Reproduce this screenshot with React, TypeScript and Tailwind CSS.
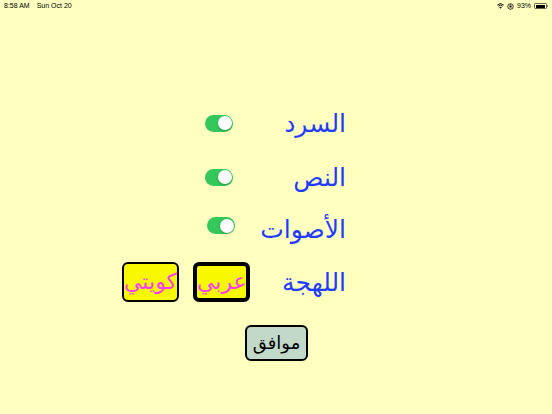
import React, { useState } from "react";

const arabic = { fontFamily: '"DejaVu Sans", "Noto Sans", sans-serif' };

function Toggle({ on, onChange }: { on: boolean; onChange: () => void }) {
  return (
    <button
      onClick={onChange}
      className={`relative w-[28px] h-[17px] rounded-full ${on ? "bg-[#34c759]" : "bg-[#d9d9d9]"}`}
    >
      <span
        className={`absolute top-[1.5px] w-[14px] h-[14px] rounded-full bg-white shadow-[0_1px_2px_rgba(0,0,0,0.25)] ${on ? "right-[1.5px]" : "left-[1.5px]"}`}
      />
    </button>
  );
}

function StatusBar() {
  return (
    <div
      className="flex items-center justify-between h-[12px] px-[4px] text-[7px] text-black"
      style={{ fontFamily: '"Liberation Sans", Arial, sans-serif' }}
    >
      <div className="flex gap-[7px]">
        <span>8:58 AM</span>
        <span>Sun Oct 20</span>
      </div>
      <div className="flex items-center gap-[3px]">
        <svg width="7" height="6" viewBox="0 0 14 11">
          <path d="M7 11 L4.5 8 A3.6 3.6 0 0 1 9.5 8 Z" fill="#000" />
          <path d="M2.6 5.8 A6.5 6.5 0 0 1 11.4 5.8" stroke="#000" strokeWidth="1.8" fill="none" />
          <path d="M0.7 3.4 A9.5 9.5 0 0 1 13.3 3.4" stroke="#000" strokeWidth="1.8" fill="none" />
        </svg>
        <svg width="7" height="7" viewBox="0 0 14 14">
          <circle cx="7" cy="7" r="5.5" stroke="#000" strokeWidth="1.6" fill="none" />
          <rect x="5" y="5.5" width="4" height="3.5" fill="#000" />
          <path d="M5.8 5.5 V4.4 A1.2 1.2 0 0 1 8.2 4.4 V5.5" stroke="#000" strokeWidth="1" fill="none" />
        </svg>
        <span>93%</span>
        <div className="flex items-center">
          <div className="w-[13px] h-[6px] rounded-[1.5px] border border-black/60 p-[0.5px]">
            <div className="w-[90%] h-full bg-black rounded-[0.5px]" />
          </div>
          <div className="w-[1px] h-[2px] bg-black/60 rounded-r" />
        </div>
      </div>
    </div>
  );
}

export default function App() {
  const [narration, setNarration] = useState(true);
  const [text, setText] = useState(true);
  const [sounds, setSounds] = useState(true);
  const [dialect, setDialect] = useState<"arabic" | "kuwaiti">("arabic");

  return (
    <div className="w-[552px] h-[414px] bg-[#ffffc0] overflow-hidden select-none">
      <StatusBar />
      <div className="pl-[205px] pt-[96px] w-[346px]" style={arabic}>
        <div className="grid grid-cols-[30px_1fr] items-center h-[30px]">
          <Toggle on={narration} onChange={() => setNarration(!narration)} />
          <span dir="rtl" className="text-right text-[25px] text-[#1f3cff] leading-none">السرد</span>
        </div>
        <div className="grid grid-cols-[30px_1fr] items-center h-[30px] mt-[24px]">
          <Toggle on={text} onChange={() => setText(!text)} />
          <span dir="rtl" className="text-right text-[25px] text-[#1f3cff] leading-none">النص</span>
        </div>
        <div className="grid grid-cols-[30px_1fr] items-center h-[30px] mt-[22px]">
          <div className="pl-[2px]">
            <Toggle on={sounds} onChange={() => setSounds(!sounds)} />
          </div>
          <span dir="rtl" className="text-right text-[25px] text-[#1f3cff] leading-none">الأصوات</span>
        </div>
      </div>
      <div className="flex items-center w-[346px] pl-[122px] mt-[18px]" style={arabic}>
        <button
          onClick={() => setDialect("kuwaiti")}
          className={`w-[57px] h-[40px] rounded-[6px] bg-[#f8f800] text-[#ff3cf0] text-[22px] leading-none ${dialect === "kuwaiti" ? "border-[4px]" : "border-[2px]"} border-black`}
        >
          كويتي
        </button>
        <button
          onClick={() => setDialect("arabic")}
          className={`ml-[14px] w-[57px] h-[40px] rounded-[6px] bg-[#f8f800] text-[#ff3cf0] text-[22px] leading-none ${dialect === "arabic" ? "border-[4px]" : "border-[2px]"} border-black`}
        >
          عربي
        </button>
        <span dir="rtl" className="ml-auto text-[25px] text-[#1f3cff] leading-none">اللهجة</span>
      </div>
      <div className="pl-[245px] mt-[23px]" style={arabic}>
        <button className="w-[63px] h-[36px] rounded-[6px] bg-[#c2d9c9] border-[2px] border-black text-[18px] text-black leading-none">
          موافق
        </button>
      </div>
    </div>
  );
}
